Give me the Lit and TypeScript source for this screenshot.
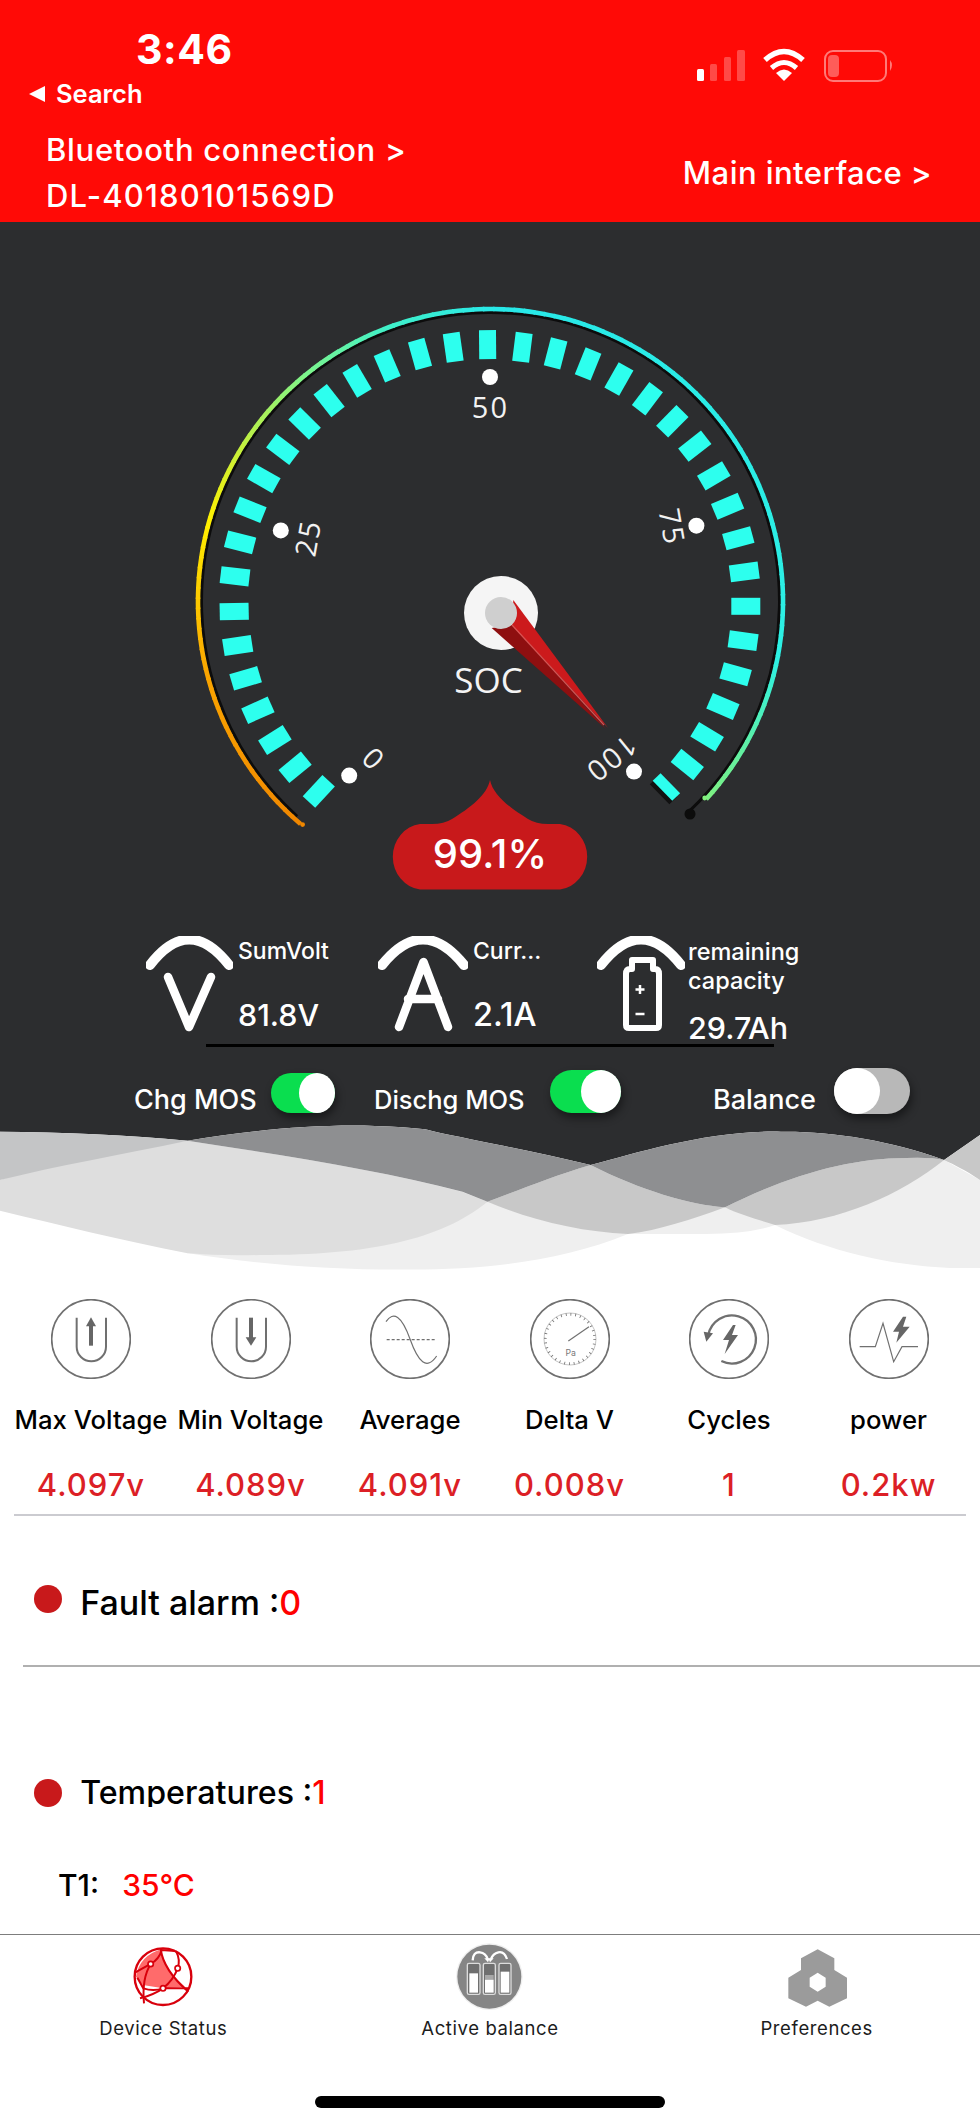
import { LitElement, html, svg, css } from "lit";
import { customElement } from "lit/decorators.js";

const Z = 2.529;
const TICKS: [number, number][] = [
  [778,138],[866,145],[950,160],[1032,187],[1110,225],[1182,275],[1245,332],[1302,395],[1350,470],[1385,547],[1412,628],[1427,713],[1431,800],[1424,887],[1405,972],[1373,1053],[1333,1130],[1283,1200],
  [691,145],[607,162],[524,192],[448,230],[377,280],[315,338],[260,403],[212,477],[177,556],[152,638],[139,724],[137,813],[146,899],[166,982],[197,1063],[240,1138],[291,1207],[351,1268],
];
const STOPS: [number, number[]][] = [
  [-140,[240,135,0]],[-105,[250,165,0]],[-75,[255,240,0]],[-51,[165,240,95]],[-40,[125,245,140]],[-22,[65,240,200]],[0,[40,232,232]],[100,[45,240,228]],[119,[95,240,165]],[133,[130,240,125]],
];
function colorAt(a: number) {
  for (let i = 0; i < STOPS.length - 1; i++) {
    const [a0, c0] = STOPS[i];
    const [a1, c1] = STOPS[i + 1];
    if (a <= a1) {
      const t = Math.max(0, (a - a0) / (a1 - a0));
      return `rgb(${c0.map((v, k) => Math.round(v + (c1[k] - v) * t)).join(",")})`;
    }
  }
  return "rgb(130,240,125)";
}
const CX = 490.5, CY = 601.5;
function pt(r: number, a: number) {
  const t = (a * Math.PI) / 180;
  return [CX + r * Math.sin(t), CY - r * Math.cos(t)];
}
function arc(r: number, a0: number, a1: number) {
  const [x0, y0] = pt(r, a0);
  const [x1, y1] = pt(r, a1);
  const large = Math.abs(a1 - a0) > 180 ? 1 : 0;
  return `M${x0.toFixed(2)} ${y0.toFixed(2)}A${r} ${r} 0 ${large} 1 ${x1.toFixed(2)} ${y1.toFixed(2)}`;
}
function segments() {
  const out = [];
  for (let a = -139.5; a < 132.5; a += 2) {
    out.push(svg`<path d=${arc(292.5, a, Math.min(a + 2.3, 132.5))} class="seg" style="stroke:${colorAt(a)}"></path>`);
  }
  return out;
}
function ticks() {
  return TICKS.map(([zx, zy]) => {
    const rot = (Math.atan2(zx - 784, 800 - zy) * 180) / Math.PI;
    const x = zx / Z + 180;
    const y = zy / Z + 290;
    return svg`<rect class="tick" x="-8.5" y="-14.5" width="17" height="29" transform="translate(${x.toFixed(1)} ${y.toFixed(1)}) rotate(${rot.toFixed(1)})"></rect>`;
  });
}

const gaugeSvg = html`<svg class="gauge" viewBox="0 222 980 690" width="980" height="690">
  <path d=${arc(289, -138, 137)} fill="none" stroke="#0c0c0c" stroke-width="3"></path>
  <circle cx="690" cy="814" r="5.5" fill="#0c0c0c"></circle>
  ${segments()}
  <circle cx="302.6" cy="824.6" r="2.4" fill="rgb(240,135,0)"></circle>
  <circle cx="704.7" cy="798" r="2.4" fill="rgb(130,240,125)"></circle>
  ${ticks()}
  <rect x="-5.5" y="-14" width="11" height="28" fill="#111" transform="translate(663.500 790.500) rotate(135.700)"></rect>
  <rect class="tick" x="-5.5" y="-14" width="11" height="28" transform="translate(666.400 787) rotate(135.700)"></rect>
  <g fill="#fff">
    <circle cx="490" cy="377" r="8"></circle>
    <circle cx="280.8" cy="530.4" r="8"></circle>
    <circle cx="696.4" cy="525.7" r="8"></circle>
    <circle cx="349.2" cy="775.6" r="8"></circle>
    <circle cx="634" cy="771.6" r="8"></circle>
  </g>
  <g class="num">
    <text x="490.4" y="418">50</text>
    <text transform="translate(308.5 538) rotate(-80)" y="10">25</text>
    <text transform="translate(671.5 527) rotate(80)" y="10">75</text>
    <text transform="translate(372.6 757.4) rotate(-135)" y="10">0</text>
    <text transform="translate(611 758.6) rotate(141)" y="10">100</text>
  </g>
  <circle cx="501" cy="613" r="37" fill="#f5f5f5"></circle>
  <polygon points="513.3,600 608,728 512,625" fill="#cc1a1c"></polygon>
  <polygon points="491.7,628 512,625 606,729" fill="#8e0f10"></polygon>
  <line x1="512" y1="625" x2="604" y2="725" stroke="#d85050" stroke-width="1.2"></line>
  <circle cx="501" cy="613" r="16" fill="#cfcfcf"></circle>
  <text class="soc" x="488.5" y="693">SOC</text>
  <path d="M490,780 C487,795 470,808 452,819 Q444,824 432,824 H420 A31,33 0 0 0 420,889.5 H560 A31,33 0 0 0 560,824 H548 Q536,824 528,819 C510,808 493,795 490,780Z" fill="#c8191b"></path>
  <text class="pct" x="490" y="868">99.1%</text>
</svg>`;

const statusIcons = html`<svg class="sys" viewBox="690 45 210 40" width="210" height="40">
  <rect x="697" y="69" width="7" height="12" rx="1.5" fill="#fff"></rect>
  <rect x="710" y="64" width="7" height="17" rx="1.5" fill="#ff4a47"></rect>
  <rect x="724" y="57" width="7" height="24" rx="1.5" fill="#ff4a47"></rect>
  <rect x="737" y="50" width="8" height="31" rx="1.5" fill="#ff4a47"></rect>
  <path d="M765,60 Q784,43 803,60" fill="none" stroke="#fff" stroke-width="5.5"></path>
  <path d="M771.5,68 Q784,57 796.5,68" fill="none" stroke="#fff" stroke-width="5"></path>
  <path d="M784,81 L776,73 Q784,66 792,73 Z" fill="#fff"></path>
  <rect x="825" y="51" width="61" height="30" rx="8" fill="none" stroke="#ff7a78" stroke-width="2"></rect>
  <rect x="828" y="55" width="11" height="22" rx="4" fill="#ff5c59"></rect>
  <path d="M890,60 Q894,65 890,71 Z" fill="#ff7a78"></path>
</svg>`;

const arcV = html`<svg class="si" viewBox="0 0 87 96" width="87" height="96">
  <path d="M4,29 Q43,-22 83,29" class="w"></path>
  <path d="M22,41 L43,91 L65,41" class="w w7"></path>
</svg>`;
const arcA = html`<svg class="si" viewBox="0 0 90 96" width="90" height="96">
  <path d="M4,29 Q45,-22 86,29" class="w"></path>
  <path d="M21,91 L45.500,26 L70,91 M30,63 H60" class="w w7"></path>
</svg>`;
const arcB = html`<svg class="si" viewBox="0 0 88 96" width="88" height="96">
  <path d="M4,29 Q44,-22 84,29" class="w"></path>
  <path d="M35,24 V33 H33 Q29,33 29,38 V89 Q29,92 32,92 H59 Q62,92 62,89 V38 Q62,33 58,33 H56 V24Z" class="w w5"></path>
  <path d="M43,49 V58 M38.500,53.500 H47.500 M38.500,78 H47.500" class="w w2"></path>
</svg>`;

const ICONS = [
  svg`<circle cx="120" cy="120" r="118" class="ring"></circle>
    <path d="M77,56 V143 A43,43 0 0 0 165,143 V56" class="g5"></path>
    <rect x="114" y="78" width="12" height="62" class="gf"></rect><polygon points="105,82 120,55 135,82" class="gf"></polygon>`,
  svg`<circle cx="120" cy="120" r="118" class="ring"></circle>
    <path d="M77,56 V143 A43,43 0 0 0 165,143 V56" class="g5"></path>
    <rect x="114" y="56" width="12" height="62" class="gf"></rect><polygon points="104,115 120,140 136,115" class="gf"></polygon>`,
  svg`<circle cx="120" cy="120" r="118" class="ring"></circle>
    <path d="M48,68 C70,35 95,50 120,120 C145,190 170,215 200,171" class="g3"></path>
    <path d="M50,122 H200" class="g3" stroke-dasharray="9 6"></path>`,
  svg`<circle cx="120" cy="120" r="118" class="ring"></circle>
    <circle cx="120" cy="120" r="78" class="g1"></circle>
    <circle cx="120" cy="120" r="74" class="g6" stroke-dasharray="2.500 12"></circle>
    <path d="M115,126 L177,83" class="g3"></path>
    <text x="122" y="170" class="pa">Pa</text>`,
  svg`<circle cx="120" cy="120" r="118" class="ring"></circle>
    <path d="M97,186 A72,72 0 1 0 58,108" class="g7"></path>
    <polygon points="44,98 72,103 52,128" class="gf"></polygon>
    <polygon points="132,78 102,123 120,123 107,165 147,108 129,108 140,78" class="gf"></polygon>`,
  svg`<circle cx="120" cy="120" r="118" class="ring"></circle>
    <path d="M32,143 H79 L102,73 L134,188 L159,143 H207" class="g3"></path>
    <polygon points="162,53 132,98 150,98 142,131 182,83 162,83 172,53" class="gf"></polygon>`,
];

const METRICS = [
  ["Max Voltage", "4.097v"],
  ["Min Voltage", "4.089v"],
  ["Average", "4.091v"],
  ["Delta V", "0.008v"],
  ["Cycles", "1"],
  ["power", "0.2kw"],
];

const navStatus = html`<svg class="ni" viewBox="-6 0 270 240" width="90" height="80">
  <circle cx="129" cy="125" r="85" fill="#fff"></circle>
  <path d="M48,125 Q58,62 125,42 Q128,105 195,155 L130,160 L68,150Z" fill="#ff6b6b"></path>
  <g fill="none" stroke="#d8000c" stroke-width="6">
    <circle cx="129" cy="125" r="85" stroke-width="7"></circle>
    <path d="M122,42 Q130,105 205,170"></path>
    <path d="M46,112 L92,87 Q118,72 125,45 L165,48"></path>
    <path d="M92,87 Q65,130 72,205"></path>
    <path d="M52,128 L70,160 Q100,170 129,160 L205,160"></path>
    <path d="M173,100 Q160,135 129,160 Q100,180 60,190"></path>
    <path d="M173,100 Q182,75 168,48"></path>
  </g>
  <g fill="#fff" stroke="#d8000c" stroke-width="5">
    <circle cx="92" cy="87" r="8"></circle><circle cx="173" cy="100" r="8"></circle><circle cx="129" cy="160" r="8"></circle>
  </g>
</svg>`;
const navBalance = html`<svg class="ni" viewBox="0 0 270 240" width="90" height="80">
  <circle cx="133" cy="125" r="100" fill="#efefef"></circle>
  <circle cx="133" cy="125" r="96" fill="#858585"></circle>
  <g fill="#6f6f6f" stroke="#dcdcdc" stroke-width="4">
    <rect x="67" y="85" width="38" height="93" rx="5"></rect>
    <rect x="115" y="85" width="36" height="93" rx="5"></rect>
    <rect x="162" y="85" width="36" height="93" rx="5"></rect>
  </g>
  <rect x="73" y="115" width="26" height="58" fill="#fff"></rect>
  <rect x="120" y="120" width="26" height="14" fill="#a8a8a8"></rect>
  <rect x="120" y="134" width="26" height="39" fill="#fff"></rect>
  <rect x="167" y="110" width="26" height="63" fill="#fff"></rect>
  <g fill="none" stroke="#fff" stroke-width="7">
    <path d="M83,76 Q84,50 105,52 Q122,54 128,72"></path>
    <path d="M186,72 Q178,48 160,52 Q144,56 138,72"></path>
  </g>
  <polygon points="118,70 134,70 129,82" fill="#fff"></polygon>
  <polygon points="130,70 146,70 135,82" fill="#fff"></polygon>
</svg>`;
const navPrefs = html`<svg class="ni" viewBox="3 0 270 240" width="90" height="80">
  <path fill-rule="evenodd" fill="#9b9b9b" d="M140,43 L190,70 V105 L228,128 V190 L175,215 L140,197 L105,215 L52,190 V128 L90,105 V70Z M140,113 L116,128 V155 L140,170 L164,155 V128Z"></path>
</svg>`;

const TOP_A = "C320,1124 250,1130 187.500,1140.700";
@customElement("app-root")
export class AppRoot extends LitElement {
  static styles = css`
    :host { display: block; width: 980px; background: #fff; font-family: Inter, "Liberation Sans", sans-serif; color: #000; }
    svg { display: block; }
    .hdr { height: 222px; box-sizing: border-box; background: #ff0a06; color: #fff; padding-top: 27px; }
    .status { display: flex; height: 44px; }
    .time { margin-left: 136px; font-size: 41px; line-height: 44px; font-weight: 700; letter-spacing: .5px; }
    .sys { margin-left: auto; margin-right: 80px; margin-top: 18px; }
    .search { display: flex; align-items: center; height: 28px; margin-top: 8.5px; padding-left: 29px; font-size: 25.5px; line-height: 28px; font-weight: 600; }
    .tri { width: 0; height: 0; border-style: solid; border-width: 8px 16px 8px 0; border-color: transparent #fff transparent transparent; margin-right: 11px; }
    .links { display: flex; align-items: center; justify-content: space-between; margin-top: 19.5px; padding: 0 48px 0 46px; font-size: 31px; line-height: 46px; letter-spacing: .7px; font-weight: 500; }
    .sn { letter-spacing: 1.2px; }
    .mi2 { letter-spacing: .45px; }
    .dark { background: #2c2d2f; }
    .num text { fill: #f2f2f2; font-family: "Open Sans", sans-serif; font-size: 29px; letter-spacing: 2px; text-anchor: middle; }
    .seg { fill: none; stroke-width: 4.6; }
    .tick { fill: #2dffee; }
    .soc { fill: #f4f4f4; font-family: "Open Sans", sans-serif; font-size: 35px; text-anchor: middle; }
    .pct { fill: #fff; font-family: Inter, sans-serif; font-weight: 500; font-size: 40px; text-anchor: middle; }
    .stats { display: grid; grid-template-columns: 232px 219px 1fr; height: 132px; box-sizing: border-box; padding: 25px 0 0 146px; color: #fff; }
    .stat { display: flex; }
    .si { flex: none; margin-top: -1px; }
    .w { fill: none; stroke: #fff; stroke-width: 10; stroke-linecap: round; stroke-linejoin: round; }
    .w7 { stroke-width: 8.5; }
    .w5 { stroke-width: 6; }
    .w2 { stroke-width: 2.5; stroke-linecap: butt; }
    .st { margin-left: 5px; }
    .st3 { margin-left: 3px; }
    .lab { font-size: 23px; line-height: 29px; font-weight: 500; white-space: nowrap; }
    .lab.r { font-size: 23.5px; }
    .val { font-size: 30.5px; line-height: 34px; font-weight: 500; margin-top: 32px; white-space: nowrap; }
    .val.a { font-size: 32.5px; }
    .val.tight { margin-top: 16px; font-size: 30.5px; }
    .line { height: 3px; margin: 0 206px; background: #000; }
    .mos { display: grid; grid-template-columns: 240px 339px 1fr; height: 73px; padding-left: 134px; color: #fff; font-size: 27px; font-weight: 500; line-height: 34px; }
    .mi { display: flex; align-items: flex-start; }
    .mi span { margin-top: 36px; white-space: nowrap; }
    .mi span.d { font-size: 25.5px; }
    .sw { position: relative; border-radius: 999px; background: #0ade4f; box-shadow: 2px 5px 8px rgba(0,0,0,.45); }
    .knob { position: absolute; top: 0; bottom: 0; background: #fff; border-radius: 50%; }
    .s1 { width: 64px; height: 40px; margin: 26px 0 0 14px; }
    .s1 .knob { right: 0; width: 36px; }
    .s2 { width: 71px; height: 43px; margin: 23px 0 0 25px; }
    .s2 .knob { right: 0; width: 40px; }
    .s3 { width: 76px; height: 46px; margin: 21px 0 0 18px; background: #b8b8b8; }
    .s3 .knob { left: 0; width: 46px; }
    .waves { background: #fff; }
    .metrics { display: grid; grid-template-columns: repeat(6, 159.5px); padding: 29px 0 0 11.25px; }
    .m { display: flex; flex-direction: column; align-items: center; }
    .m svg { width: 80px; height: 80px; }
    .ring { fill: none; stroke: #707070; stroke-width: 5; }
    .g5 { fill: none; stroke: #707070; stroke-width: 6; }
    .g7 { fill: none; stroke: #707070; stroke-width: 7; }
    .g3 { fill: none; stroke: #707070; stroke-width: 3.5; }
    .g1 { fill: none; stroke: #8a8a8a; stroke-width: 1.500; }
    .g6 { fill: none; stroke: #707070; stroke-width: 8; }
    .gf { fill: #666; }
    .pa { fill: #777; font-family: Inter, sans-serif; font-size: 26px; text-anchor: middle; }
    .ml { margin-top: 26px; font-size: 25.7px; line-height: 30px; font-weight: 500; white-space: nowrap; }
    .mv { margin-top: 32px; font-size: 31px; line-height: 36px; letter-spacing: 1px; font-weight: 500; color: #dc1f26; white-space: nowrap; }
    .div1 { height: 2px; margin: 11px 14px 0; background: #cbcbd0; }
    .row { display: flex; align-items: flex-start; padding-left: 33.7px; line-height: 40px; font-weight: 500; }
    .dot { flex: none; width: 28px; height: 28px; border-radius: 50%; background: #c8191b; margin-right: 18.5px; }
    .red { color: #ff0000; }
    .f { margin-top: 67px; font-size: 34px; }
    .t { margin-top: 106px; height: 33.6px; overflow: hidden; font-size: 32.2px; }
    .t .dot { margin-top: 6px; }
    .f .dot { margin-top: 1.6px; }
    .div2 { height: 2px; margin: 42px 0 0 23px; background: #b0b0b0; }
    .tv { display: flex; margin: 58px 0 0 58px; font-size: 30px; line-height: 40px; font-weight: 500; }
    .tv b { font-weight: 500; margin-left: 23px; color: #ff0000; }
    .nav { margin-top: 29px; border-top: 1px solid #7d7d7d; display: grid; grid-template-columns: repeat(3, 1fr); }
    .n { display: flex; flex-direction: column; align-items: center; }
    .n span { font-size: 18.5px; line-height: 22px; letter-spacing: .6px; color: #1c1c1c; margin-top: 2px; white-space: nowrap; }
    .home { width: 350px; height: 12px; border-radius: 6px; background: #000; margin: 57px auto 18px; }
  `;

  render() {
    return html`
      <div class="hdr">
        <div class="status"><div class="time">3:46</div>${statusIcons}</div>
        <div class="search"><i class="tri"></i>Search</div>
        <div class="links">
          <div>Bluetooth connection &gt;<br /><span class="sn">DL-40180101569D</span></div>
          <div class="mi2">Main interface &gt;</div>
        </div>
      </div>
      <div class="dark">
        ${gaugeSvg}
        <div class="stats">
          <div class="stat">${arcV}<div class="st"><div class="lab">SumVolt</div><div class="val">81.8V</div></div></div>
          <div class="stat">${arcA}<div class="st"><div class="lab">Curr...</div><div class="val a">2.1A</div></div></div>
          <div class="stat">${arcB}<div class="st st3"><div class="lab r">remaining<br />capacity</div><div class="val tight">29.7Ah</div></div></div>
        </div>
        <div class="line"></div>
        <div class="mos">
          <div class="mi"><span>Chg MOS</span><div class="sw s1"><i class="knob"></i></div></div>
          <div class="mi"><span class="d">Dischg MOS</span><div class="sw s2"><i class="knob"></i></div></div>
          <div class="mi"><span>Balance</span><div class="sw s3"><i class="knob"></i></div></div>
        </div>
      </div>
      <svg class="waves" viewBox="0 1120 980 150" width="980" height="150">
        <path fill="#2c2d2f" d="M0,1120 H980 V1135 L944,1160 C890,1140 830,1131 781,1131.700 C710,1130 640,1152 590.600,1165 C530,1150 455,1137 425,1129.300 Q405,1127 375,1126 ${TOP_A} C130,1135 60,1132 0,1131.700Z"></path>
        <path fill="#efefef" d="M187,1253 C260,1265 340,1270 406,1269.500 C480,1270 560,1262 628,1234 L706,1234 Q750,1234 775,1225 C830,1252 890,1265 950,1268 L980,1268 L980,1180 L944,1160 L725,1207 L487,1201 L250,1255Z"></path>
        <path fill="#dedede" d="M0,1180 C60,1160 130,1148 187.500,1140.700 C280,1155 380,1170 462,1191.700 L487.500,1201.700 C440,1240 370,1255 260,1255 Q220,1256 187.500,1253.300 C120,1240 60,1225 0,1210.700Z"></path>
        <path fill="#c4c5c6" d="M0,1131.700 C60,1132 130,1135 187.500,1140.700 C120,1155 60,1165 0,1180Z"></path>
        <path fill="#c8c8c8" d="M590.600,1165 C640,1190 690,1205 725,1207.300 C690,1220 660,1230 628,1234 C580,1232 530,1220 487.500,1201.700 C520,1190 550,1177 590.600,1165Z"></path>
        <path fill="#c8c8c8" d="M725,1207.300 C790,1175 850,1158 906,1158 Q930,1157 944,1160 C900,1195 840,1222 775,1225 C760,1220 740,1215 725,1207.300Z"></path>
        <path fill="#c8c8c8" d="M944,1160 L980,1135 L980,1180 C965,1170 955,1165 944,1160Z"></path>
        <path fill="#8e8f91" d="M187.500,1140.700 C250,1130 320,1124 375,1126 Q405,1127 425,1129.300 C455,1137 530,1150 590.600,1165 C550,1177 520,1190 487.500,1201.700 L462.500,1191.700 C380,1170 280,1155 187.500,1140.700Z"></path>
        <path fill="#8e8f91" d="M590.600,1165 C640,1152 710,1130 781,1131.700 C830,1131 890,1140 944,1160 Q930,1157 906,1158 C850,1158 790,1175 725,1207.300 C690,1205 640,1190 590.600,1165Z"></path>
      </svg>
      <div class="metrics">
        ${METRICS.map(([l, v], i) => html`<div class="m"><svg viewBox="0 0 240 240">${ICONS[i]}</svg><div class="ml">${l}</div><div class="mv">${v}</div></div>`)}
      </div>
      <div class="div1"></div>
      <div class="row f"><i class="dot"></i><div>Fault alarm :<span class="red">0</span></div></div>
      <div class="div2"></div>
      <div class="row t"><i class="dot"></i><div>Temperatures :<span class="red">1</span></div></div>
      <div class="tv">T1:<b>35°C</b></div>
      <div class="nav">
        <div class="n">${navStatus}<span>Device Status</span></div>
        <div class="n">${navBalance}<span>Active balance</span></div>
        <div class="n">${navPrefs}<span>Preferences</span></div>
      </div>
      <div class="home"></div>
    `;
  }
}
